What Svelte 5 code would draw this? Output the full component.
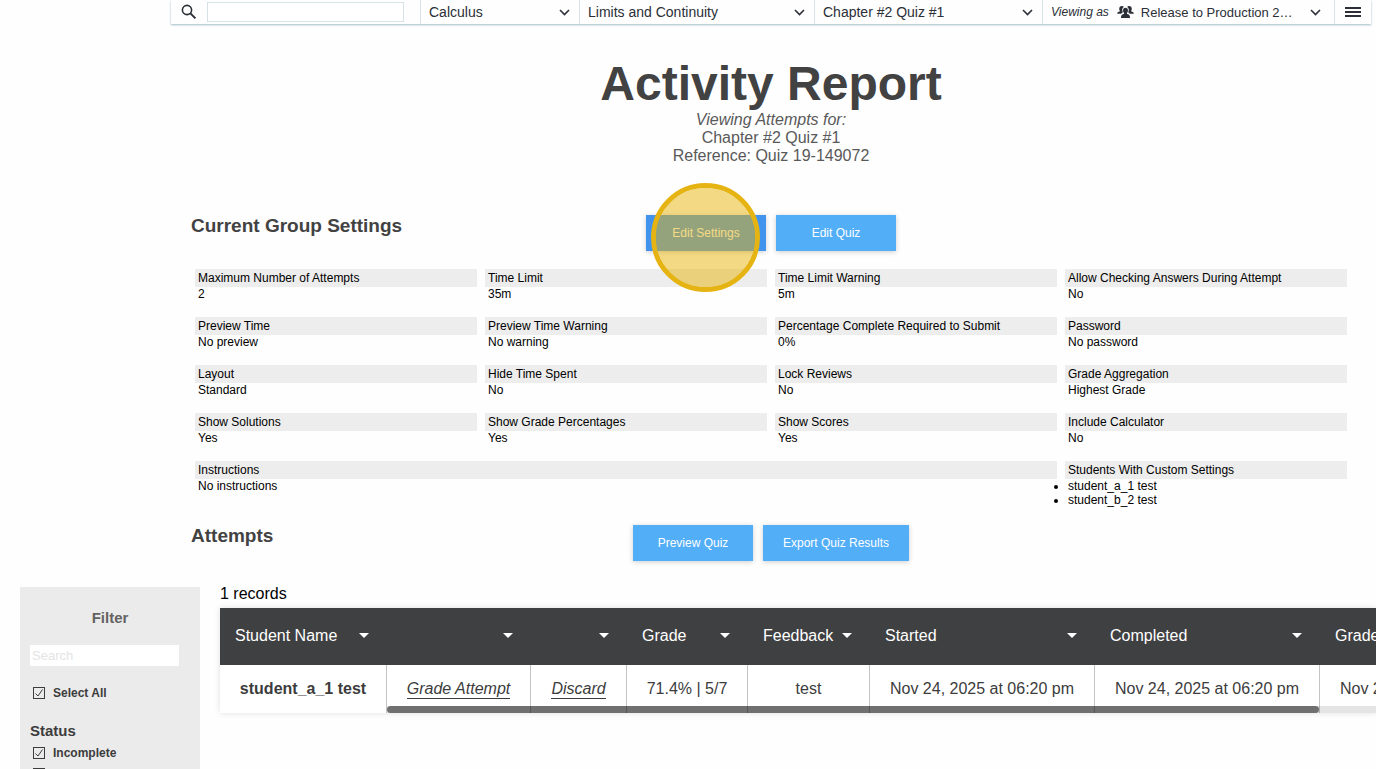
<script lang="ts">
interface Setting {
	label: string;
	value?: string;
	list?: string[];
	wide?: boolean;
}

interface Column {
	label: string;
	width: number;
}

const menus = [
	{ name: "Course", value: "Calculus" },
	{ name: "Module", value: "Limits and Continuity" },
	{ name: "Activity", value: "Chapter #2 Quiz #1" },
];

const settings: Setting[] = [
	{ label: "Maximum Number of Attempts", value: "2" },
	{ label: "Time Limit", value: "35m" },
	{ label: "Time Limit Warning", value: "5m" },
	{ label: "Allow Checking Answers During Attempt", value: "No" },
	{ label: "Preview Time", value: "No preview" },
	{ label: "Preview Time Warning", value: "No warning" },
	{ label: "Percentage Complete Required to Submit", value: "0%" },
	{ label: "Password", value: "No password" },
	{ label: "Layout", value: "Standard" },
	{ label: "Hide Time Spent", value: "No" },
	{ label: "Lock Reviews", value: "No" },
	{ label: "Grade Aggregation", value: "Highest Grade" },
	{ label: "Show Solutions", value: "Yes" },
	{ label: "Show Grade Percentages", value: "Yes" },
	{ label: "Show Scores", value: "Yes" },
	{ label: "Include Calculator", value: "No" },
	{ label: "Instructions", value: "No instructions", wide: true },
	{
		label: "Students With Custom Settings",
		list: ["student_a_1 test", "student_b_2 test"],
	},
];

const columns: Column[] = [
	{ label: "Student Name", width: 167 },
	{ label: "", width: 144 },
	{ label: "", width: 96 },
	{ label: "Grade", width: 121 },
	{ label: "Feedback", width: 122 },
	{ label: "Started", width: 225 },
	{ label: "Completed", width: 225 },
	{ label: "Graded", width: 225 },
];

const tableWidth = columns.reduce((sum, c) => sum + c.width, 0);

const attempts = [
	{
		student: "student_a_1 test",
		grade: "71.4% | 5/7",
		feedback: "test",
		started: "Nov 24, 2025 at 06:20 pm",
		completed: "Nov 24, 2025 at 06:20 pm",
		graded: "Nov 24, 2025 at 06:20 pm",
	},
];

let search = $state("");
let filterText = $state("");
let selectAll = $state(true);
let statuses = $state([
	{ label: "Incomplete", checked: true },
	{ label: "Needs Grading", checked: true },
]);
</script>

{#snippet chevron()}
	<svg class="chevron" viewBox="0 0 11 7" aria-hidden="true">
		<path d="M1 1l4.500 4.500L10 1" fill="none" stroke="currentColor" stroke-width="1.600" />
	</svg>
{/snippet}

<div class="page">
	<div class="main">
		<nav class="topbar">
			<div class="cell search">
				<svg class="magnifier" viewBox="0 0 16 16" aria-hidden="true">
					<circle cx="6" cy="6" r="4.600" fill="none" stroke="currentColor" stroke-width="1.600" />
					<path d="M9.400 9.400l5 5" stroke="currentColor" stroke-width="2" />
				</svg>
				<input type="text" aria-label="Search activities" bind:value={search} />
			</div>
			{#each menus as menu}
				<div class="cell">
					<select aria-label={menu.name}>
						<option>{menu.value}</option>
					</select>
					{@render chevron()}
				</div>
			{/each}
			<div class="cell viewing">
				<label for="group">Viewing as</label>
				<svg class="people" viewBox="0 0 18 13" aria-hidden="true">
					<g fill="currentColor">
						<path d="M2.200 3.200C2.200 1 3.300 0 5 0c1 0 1.800.4 2.300 1.100-1.500.8-2 2-1.800 3.700.1.800.4 1.500.8 2-.9.300-1.500.800-1.800 1.500H0c.1-1.600.9-2.100 2.800-2.400V5.200c-.4-.5-.6-1.200-.6-2z" />
						<path d="M15.800 3.200C15.800 1 14.700 0 13 0c-1 0-1.800.4-2.300 1.100 1.500.8 2 2 1.800 3.700-.1.800-.4 1.500-.8 2 .9.300 1.500.800 1.800 1.500H18c-.1-1.600-.9-2.100-2.800-2.400V5.200c.4-.5.6-1.200.6-2z" />
						<path d="M9 2c1.700 0 2.700 1 2.700 2.900 0 1.100-.4 2.100-1.100 2.700v1.200c2.200.4 3.200 1.200 3.400 4.200H4c.2-3 1.200-3.800 3.400-4.200V7.600c-.7-.6-1.100-1.600-1.100-2.700C6.300 3 7.300 2 9 2z" />
					</g>
				</svg>
				<select id="group">
					<option>Release to Production 2…</option>
				</select>
				{@render chevron()}
			</div>
			<button class="cell burger" aria-label="Menu">
				<svg viewBox="0 0 16 12" aria-hidden="true">
					<path d="M0 2h16M0 6h16M0 10h16" stroke="currentColor" stroke-width="1.800" />
				</svg>
			</button>
		</nav>

		<header>
			<h1>Activity Report</h1>
			<p><em>Viewing Attempts for:</em></p>
			<p>Chapter #2 Quiz #1</p>
			<p>Reference: Quiz 19-149072</p>
		</header>

		<section class="section-head">
			<h2>Current Group Settings</h2>
			<div class="actions">
				<div class="highlighted">
					<button class="btn active">Edit Settings</button>
					<span class="click-ring"></span>
				</div>
				<button class="btn">Edit Quiz</button>
			</div>
		</section>

		<dl class="settings">
			{#each settings as setting}
				<div class:wide={setting.wide}>
					<dt>{setting.label}</dt>
					<dd>
						{#if setting.list}
							<ul>
								{#each setting.list as student}
									<li>{student}</li>
								{/each}
							</ul>
						{:else}
							{setting.value}
						{/if}
					</dd>
				</div>
			{/each}
		</dl>

		<section class="section-head attempts-head">
			<h2>Attempts</h2>
			<div class="actions">
				<button class="btn">Preview Quiz</button>
				<button class="btn">Export Quiz Results</button>
			</div>
		</section>
	</div>

	<div class="results">
		<aside class="filter">
			<h3>Filter</h3>
			<input class="filter-search" type="text" placeholder="Search" aria-label="Search filters" bind:value={filterText} />
			<label class="check">
				<input type="checkbox" bind:checked={selectAll} />
				Select All
			</label>
			<h4>Status</h4>
			{#each statuses as status}
				<label class="check">
					<input type="checkbox" bind:checked={status.checked} />
					{status.label}
				</label>
			{/each}
		</aside>

		<div class="records">
			<p class="count">{attempts.length} records</p>
			<div class="table-wrap">
				<div class="scroller">
					<table style="width: {tableWidth}px">
						<colgroup>
							{#each columns as column}
								<col style="width: {column.width}px" />
							{/each}
						</colgroup>
						<thead>
							<tr>
								{#each columns as column}
									<th>
										<span class="th-inner">
											<span>{column.label}</span>
											<svg class="caret" viewBox="0 0 10 5" aria-hidden="true">
												<path d="M0 0h10L5 5z" fill="currentColor" />
											</svg>
										</span>
									</th>
								{/each}
							</tr>
						</thead>
						<tbody>
							{#each attempts as attempt}
								<tr>
									<td class="student">{attempt.student}</td>
									<td><a href="#grade">Grade Attempt</a></td>
									<td><a href="#discard">Discard</a></td>
									<td>{attempt.grade}</td>
									<td>{attempt.feedback}</td>
									<td>{attempt.started}</td>
									<td>{attempt.completed}</td>
									<td>{attempt.graded}</td>
								</tr>
							{/each}
						</tbody>
					</table>
				</div>
				<div class="scrollbar"><div class="thumb"></div></div>
			</div>
		</div>
	</div>
</div>

<style>
	:global(body) {
		background: #fefefe;
	}

	.page {
		height: 100vh;
		overflow: hidden;
		font-family: "Liberation Sans", Arial, Helvetica, sans-serif;
		font-size: 12px;
		color: #000;
	}

	.main {
		margin: 0 5px 0 171px;
	}

	h1,
	h2,
	h3,
	h4,
	p,
	dl,
	dd,
	ul {
		margin: 0;
	}

	button,
	input,
	select {
		font-family: inherit;
	}

	/* Top bar */
	.topbar {
		display: grid;
		grid-template-columns: 249fr 159fr 235fr 228fr 292fr 37px;
		height: 24px;
		background: #fefefe;
		color: #2b2f38;
		box-shadow: 0 1px 2px #9fbcc3;
	}

	.cell {
		display: flex;
		align-items: center;
		min-width: 0;
		box-sizing: border-box;
		padding: 0 9px 0 8px;
		border-left: 1px solid #d5e3e6;
	}

	.cell select {
		flex: 1;
		min-width: 0;
		height: 24px;
		padding: 0;
		border: 0;
		background: none;
		color: inherit;
		font-size: 14px;
		appearance: none;
	}

	.chevron {
		width: 11px;
		height: 7px;
		flex: none;
	}

	.search {
		gap: 10px;
		padding: 0 16px 0 10px;
		border-left: 0;
	}

	.magnifier {
		width: 16px;
		height: 16px;
		flex: none;
	}

	.search input {
		flex: 1;
		min-width: 0;
		height: 20px;
		box-sizing: border-box;
		border: 1px solid #d5e3e6;
		background: #fff;
	}

	.viewing {
		padding-right: 13px;
	}

	.viewing label {
		font-style: italic;
		flex: none;
	}

	.viewing select {
		font-size: 13px;
	}

	.people {
		width: 17px;
		height: 12px;
		flex: none;
		margin: 0 7px 0 8px;
	}

	.burger {
		justify-content: center;
		padding: 0;
		border-width: 0 0 0 1px;
		background: none;
		color: inherit;
	}

	.burger svg {
		width: 16px;
		height: 12px;
	}

	/* Title */
	header {
		padding-top: 32px;
		text-align: center;
		font-size: 16px;
		line-height: 18px;
		color: #595959;
	}

	h1 {
		font-size: 48px;
		line-height: 55px;
		color: #424242;
	}

	/* Section headings */
	.section-head {
		display: grid;
		grid-template-columns: 1fr auto 1fr;
		margin-top: 50px;
		padding: 0 20px;
	}

	.attempts-head {
		margin-top: 18px;
	}

	h2 {
		font-size: 19px;
		line-height: 22px;
		color: #424242;
	}

	.actions {
		display: flex;
		gap: 10px;
	}

	.btn {
		min-width: 120px;
		height: 36px;
		padding: 0 20px;
		border: 0;
		background: #52aef7;
		box-shadow: 0 1px 5px rgba(0, 0, 0, 0.2);
		color: #fff;
		font-size: 12px;
	}

	.btn.active {
		background: #4193ee;
	}

	.highlighted {
		position: relative;
	}

	.click-ring {
		position: absolute;
		top: -32px;
		left: 5px;
		width: 109px;
		height: 109px;
		box-sizing: border-box;
		border: 5px solid #e6b412;
		border-radius: 50%;
		background: rgba(234, 180, 12, 0.5);
		background-clip: padding-box;
		pointer-events: none;
	}

	/* Settings */
	.settings {
		display: grid;
		grid-template-columns: repeat(4, 1fr);
		gap: 16px 8px;
		margin-top: 18px;
		padding: 0 24px;
		line-height: 14px;
	}

	.wide {
		grid-column: span 3;
	}

	dt {
		padding: 0 3px;
		background: #ededed;
		line-height: 18px;
	}

	dd {
		padding: 0 3px;
	}

	ul {
		padding: 0;
	}

	/* Filter and attempts */
	.results {
		display: flex;
		align-items: flex-start;
		gap: 20px;
		margin-top: 26px;
		padding-left: 20px;
	}

	.filter {
		flex: none;
		width: 180px;
		box-sizing: border-box;
		padding: 22px 10px 40px;
		background: #ebebeb;
		color: #3c3c3c;
	}

	h3 {
		font-size: 15px;
		line-height: 18px;
		text-align: center;
		color: #636363;
	}

	.filter-search {
		display: block;
		width: 149px;
		height: 21px;
		box-sizing: border-box;
		margin: 18px 0;
		padding: 0 2px;
		border: 0;
		background: #fff;
		font-size: 13px;
	}

	.filter-search::placeholder {
		color: #e4e4e4;
	}

	.check {
		display: flex;
		align-items: center;
		gap: 8px;
		height: 18px;
		margin-bottom: 3px;
		padding-left: 3px;
		font-weight: bold;
	}

	.check input {
		width: 12px;
		height: 12px;
		margin: 0;
		border: 1px solid #3c3c3c;
		appearance: none;
	}

	.check input:checked {
		background: url("data:image/svg+xml,%3Csvg xmlns='http://www.w3.org/2000/svg' viewBox='0 0 10 10'%3E%3Cpath d='M1.500 5.500l2.500 2.500 4.500-6.500' fill='none' stroke='%233c3c3c'/%3E%3C/svg%3E") center / 10px 10px no-repeat;
	}

	h4 {
		margin: 20px 0 4px;
		font-size: 15px;
		line-height: 18px;
	}

	.records {
		flex: 1;
		min-width: 0;
	}

	.count {
		margin-bottom: 7px;
		font-size: 16px;
		line-height: 14px;
	}

	.table-wrap {
		position: relative;
		box-shadow: 0 0 6px rgba(0, 0, 0, 0.12);
	}

	.scroller {
		overflow: hidden;
	}

	table {
		table-layout: fixed;
		border-collapse: separate;
		border-spacing: 0;
		background: #fff;
		font-size: 16px;
		color: #3c3c3c;
	}

	th {
		height: 57px;
		box-sizing: border-box;
		padding: 0 18px 2px 15px;
		background: #3f4042;
		color: #fff;
		font-weight: normal;
		text-align: left;
	}

	.th-inner {
		display: flex;
		align-items: center;
		justify-content: space-between;
	}

	.caret {
		width: 10px;
		height: 5px;
		flex: none;
	}

	td {
		height: 48px;
		box-sizing: border-box;
		padding: 0;
		border-right: 1px solid #c4c4c4;
		text-align: center;
		white-space: nowrap;
	}

	.student {
		font-weight: bold;
	}

	td a {
		padding-bottom: 1px;
		border-bottom: 1px solid #3c3c3c;
		color: inherit;
		font-style: italic;
		text-decoration: none;
	}

	.scrollbar {
		position: absolute;
		right: 0;
		bottom: 0;
		left: 167px;
		padding-right: 57px;
		background: rgba(0, 0, 0, 0.1);
	}

	.thumb {
		height: 7px;
		border-radius: 4px;
		background: rgba(0, 0, 0, 0.51);
	}
</style>
